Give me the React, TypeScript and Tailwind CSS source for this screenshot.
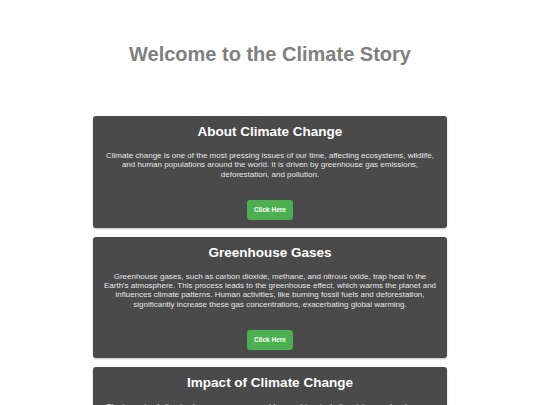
import React from "react";

const cards = [
  {
    title: "About Climate Change",
    body: "Climate change is one of the most pressing issues of our time, affecting ecosystems, wildlife, and human populations around the world. It is driven by greenhouse gas emissions, deforestation, and pollution.",
  },
  {
    title: "Greenhouse Gases",
    body: "Greenhouse gases, such as carbon dioxide, methane, and nitrous oxide, trap heat in the Earth's atmosphere. This process leads to the greenhouse effect, which warms the planet and influences climate patterns. Human activities, like burning fossil fuels and deforestation, significantly increase these gas concentrations, exacerbating global warming.",
  },
  {
    title: "Impact of Climate Change",
    body: "The impacts of climate change are severe and far-reaching, including rising sea levels, more frequent extreme weather events, loss of biodiversity, and threats to food and water security.",
  },
];

export default function App() {
  return (
    <div
      className="w-[540px] bg-white overflow-hidden h-[405px]"
      style={{ fontFamily: '"Liberation Sans", Arial, sans-serif' }}
    >
      <h1 className="pt-[42px] text-center text-[20px] leading-[24px] font-bold text-[#808080]">
        Welcome to the Climate Story
      </h1>
      <div className="mt-[50px] flex flex-col items-center gap-[9px]">
        {cards.map((c) => (
          <div
            key={c.title}
            className="w-[354px] rounded-[3px] bg-[#4a4a4a] px-[8px] pt-[8px] pb-[8px] text-center shadow-[0_1px_2px_rgba(0,0,0,0.25)]"
          >
            <h2 className="text-[13.5px] leading-[16px] font-bold text-white">{c.title}</h2>
            <p className="mt-[11px] text-[8px] leading-[9.3px] text-[#e6e6e6]">{c.body}</p>
            <div className="mt-[21px] flex justify-center">
              <button className="h-[20px] w-[46px] rounded-[3px] bg-[#4caf50] text-[6.5px] font-bold text-white">
                Click Here
              </button>
            </div>
          </div>
        ))}
      </div>
    </div>
  );
}
